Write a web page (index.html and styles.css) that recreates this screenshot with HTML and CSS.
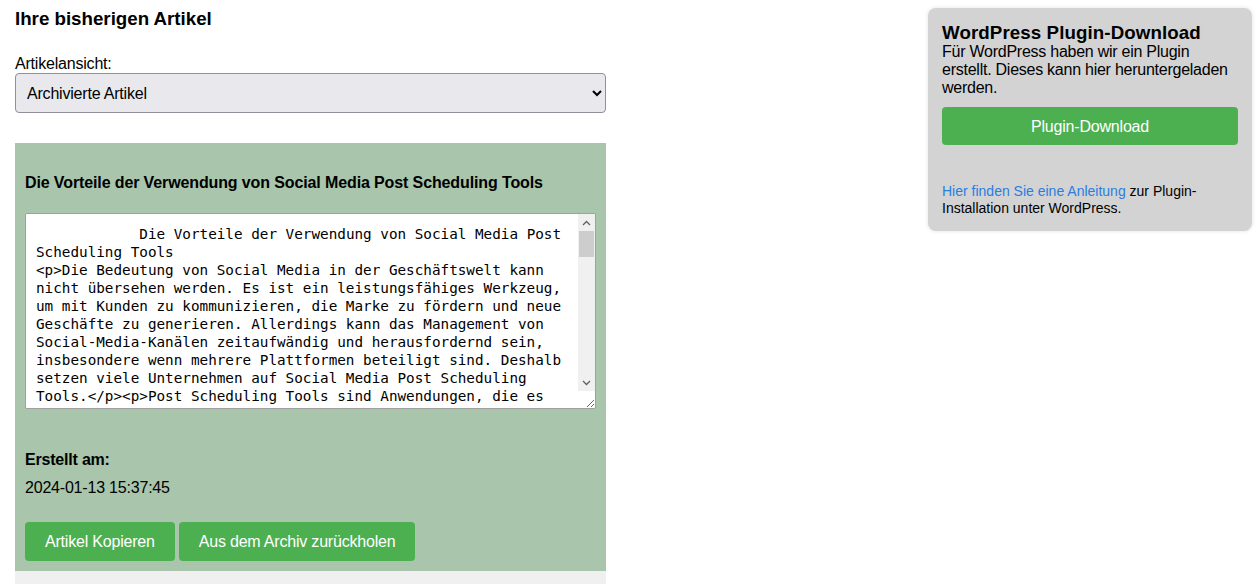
FILE: index.html
```html
<!DOCTYPE html>
<html lang="de">
<head>
    <meta charset="UTF-8">
    <meta name="viewport" content="width=device-width, initial-scale=1.0">
    <title>Ihre bisherigen Artikel</title>
    <link rel="stylesheet" href="styles.css">
</head>
<body>
    <div class="page">
        <div class="articles">
            <h3 class="page-title">Ihre bisherigen Artikel</h3>

            <label for="view" class="view-label">Artikelansicht:</label>
            <select id="view" name="view" class="view-select">
                <option value="aktiv">Aktive Artikel</option>
                <option value="archiv" selected>Archivierte Artikel</option>
            </select>

            <div class="article">
                <h4 class="article-title">Die Vorteile der Verwendung von Social Media Post Scheduling Tools</h4>
                <div class="text-wrap">
                    <textarea class="article-text" readonly>            Die Vorteile der Verwendung von Social Media Post Scheduling Tools
&lt;p&gt;Die Bedeutung von Social Media in der Geschäftswelt kann nicht übersehen werden. Es ist ein leistungsfähiges Werkzeug, um mit Kunden zu kommunizieren, die Marke zu fördern und neue Geschäfte zu generieren. Allerdings kann das Management von Social-Media-Kanälen zeitaufwändig und herausfordernd sein, insbesondere wenn mehrere Plattformen beteiligt sind. Deshalb setzen viele Unternehmen auf Social Media Post Scheduling Tools.&lt;/p&gt;&lt;p&gt;Post Scheduling Tools sind Anwendungen, die es ermöglichen, Social-Media-Beiträge im Voraus zu planen und automatisch zu veröffentlichen.&lt;/p&gt;&lt;p&gt;Dadurch sparen Unternehmen Zeit und können ihre Inhalte gezielt zu den besten Zeiten posten.&lt;/p&gt;</textarea>
                    <!-- drawn scrollbar, the headless browser hides the real one -->
                    <div class="fake-scroll" aria-hidden="true">
                        <span class="scroll-btn">
                            <svg width="9" height="6" viewBox="0 0 9 6"><path d="M1 5 L4.5 1.5 L8 5" fill="none" stroke="#606060" stroke-width="1.3"/></svg>
                        </span>
                        <span class="scroll-thumb"></span>
                        <span class="scroll-btn scroll-btn-down">
                            <svg width="9" height="6" viewBox="0 0 9 6"><path d="M1 1 L4.5 4.5 L8 1" fill="none" stroke="#606060" stroke-width="1.3"/></svg>
                        </span>
                    </div>
                </div>

                <p class="meta-label">Erstellt am:</p>
                <p class="meta-value">2024-01-13 15:37:45</p>

                <div class="actions">
                    <button class="btn">Artikel Kopieren</button>
                    <button class="btn">Aus dem Archiv zurückholen</button>
                </div>
            </div>
            <div class="article article-next"></div>
        </div>

        <div class="plugin-box">
            <h3 class="plugin-title">WordPress Plugin-Download</h3>
            <p class="plugin-text">Für WordPress haben wir ein Plugin erstellt. Dieses kann hier heruntergeladen werden.</p>
            <button class="btn btn-wide">Plugin-Download</button>
            <p class="plugin-note"><a href="#">Hier finden Sie eine Anleitung</a> zur Plugin-Installation unter WordPress.</p>
        </div>
    </div>
</body>
</html>
```

FILE: styles.css
```css
body {
    font-family: Arial, "Liberation Sans", sans-serif;
    margin: 0;
    padding: 0;
    background-color: #ffffff;
    color: #000;
    letter-spacing: -0.2px;
}

.page {
    display: flex;
    justify-content: space-between;
    align-items: flex-start;
    padding: 8px 6px 0 15px;
}

.articles {
    width: 591px;
}

.page-title {
    font-size: 18.72px;
    line-height: 22px;
    letter-spacing: 0;
    margin: 0;
}

.view-label {
    display: block;
    margin-top: 24px;
    font-size: 16px;
    line-height: 19px;
}

.view-select {
    display: block;
    width: 100%;
    height: 40px;
    padding: 0 7px;
    font-family: Arial, "Liberation Sans", sans-serif;
    font-size: 16px;
    letter-spacing: -0.2px;
    color: #000;
    background-color: #e9e9ed;
    border: 1px solid #8f8f9d;
    border-radius: 4px;
}

.article {
    background-color: #a9c5ab; /* green card */
    margin-top: 30px;
    padding: 10px;
}

.article-title {
    font-size: 16px;
    line-height: 19px;
    letter-spacing: -0.12px;
    margin: 20px 0 21px;
}

.text-wrap {
    position: relative;
}

.article-text {
    display: block;
    width: 100%;
    height: 196px;
    box-sizing: border-box;
    padding: 11px 27px 10px 10px;
    font-family: "DejaVu Sans Mono", "Liberation Mono", monospace;
    font-size: 14.3px;
    line-height: 18px;
    letter-spacing: 0;
    color: #000;
    background: #fff;
    border: 1px solid #a0a0a0;
    border-radius: 2px;
    resize: vertical;
}

.fake-scroll {
    position: absolute;
    top: 1px;
    right: 1px;
    width: 17px;
    height: 177px;
    background: #f0f0f0;
    display: flex;
    flex-direction: column;
}

.scroll-btn {
    height: 17px;
    display: flex;
    align-items: center;
    justify-content: center;
}

.scroll-btn-down {
    margin-top: auto;
}

.scroll-thumb {
    height: 26px;
    margin: 0 1px;
    background: #cdcdcd;
}

.meta-label {
    font-weight: bold;
    font-size: 16px;
    line-height: 19px;
    margin: 41px 0 0;
}

.meta-value {
    font-size: 16px;
    line-height: 19px;
    margin: 9px 0 0;
}

.actions {
    margin-top: 25px;
    display: flex;
    gap: 4px;
}

.btn {
    background-color: #4caf50;
    color: #fff;
    border: none;
    padding: 10px 20px;
    font-family: Arial, "Liberation Sans", sans-serif;
    font-size: 16px;
    line-height: 19px;
    letter-spacing: -0.2px;
    border-radius: 4px;
    cursor: pointer;
}

.btn:hover {
    background-color: #43a047;
}

.article-next {
    background-color: #f0f0f0;
    margin-top: 0;
    height: 40px;
}

.plugin-box {
    width: 296px;
    padding: 14px;
    background-color: #d3d3d3;
    border-radius: 8px;
    box-shadow: 0 0 4px rgba(0, 0, 0, 0.12);
}

.plugin-title {
    font-size: 18.72px;
    line-height: 21px;
    letter-spacing: 0.1px;
    margin: 0;
}

.plugin-text {
    font-size: 16px;
    line-height: 18px;
    letter-spacing: -0.25px;
    margin: 0;
}

.btn-wide {
    display: block;
    width: 100%;
    height: 38px;
    padding: 0 20px;
    margin-top: 10px;
}

.plugin-note {
    font-size: 14px;
    line-height: 17px;
    letter-spacing: 0;
    margin: 38px 0 0;
}

.plugin-note a {
    color: #2a7de1;
    text-decoration: none;
}
```
